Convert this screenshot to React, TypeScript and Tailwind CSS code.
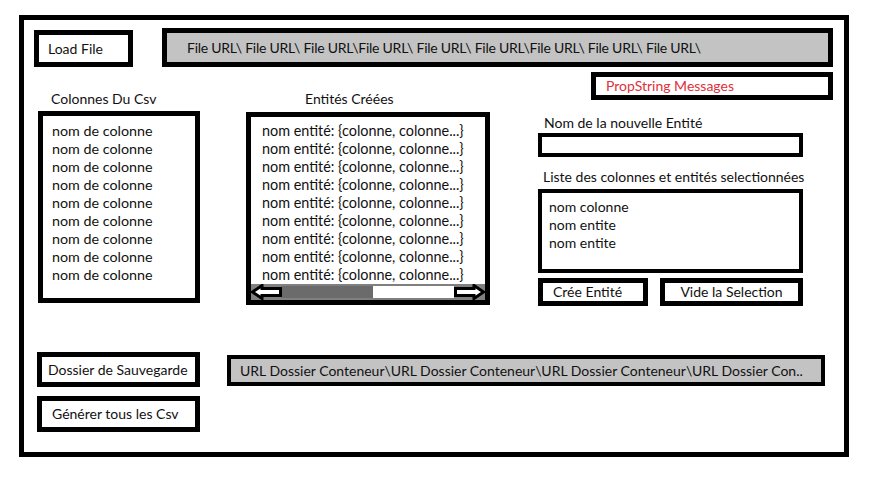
import React from "react";

const colonnes = Array.from({ length: 9 }, () => "nom de colonne");
const entites = Array.from({ length: 9 }, () => "nom entité: {colonne, colonne...}");
const selection = ["nom colonne", "nom entite", "nom entite"];

const LeftArrow = () => (
  <svg width="31" height="16" viewBox="0 0 31 16">
    <polygon points="1.5,8 11,1.5 11,4.5 29.5,4.5 29.5,11.5 11,11.5 11,14.5" fill="#fff" stroke="#000" strokeWidth="3" />
  </svg>
);

const RightArrow = () => (
  <svg width="31" height="16" viewBox="0 0 31 16">
    <polygon points="29.5,8 20,1.5 20,4.5 1.5,4.5 1.5,11.5 20,11.5 20,14.5" fill="#fff" stroke="#000" strokeWidth="3" />
  </svg>
);

export default function App() {
  return (
    <div className="w-[876px] h-[477px] bg-white pt-[15px] pl-[19px] font-['Lato',sans-serif] text-[14px] leading-[18px] text-[#111]">
      <div className="w-[830px] h-[442px] border-[5px] border-black flex flex-col">
        {/* top bar */}
        <div className="flex items-start pt-[8px]">
          <div className="ml-[10px] mt-[2px] w-[99px] h-[37px] border-[5px] border-black flex items-center pl-[9px]">
            Load File
          </div>
          <div className="ml-[29px] w-[671px] h-[39px] border-[5px] border-black bg-[#c3c3c3] flex items-center pl-[20px] whitespace-nowrap overflow-hidden tracking-[-0.25px]">
            File URL\ File URL\ File URL\File URL\ File URL\ File URL\File URL\ File URL\ File URL\
          </div>
        </div>

        {/* middle */}
        <div className="flex items-start">
          {/* colonnes du csv */}
          <div className="ml-[14px] w-[162px] flex flex-col">
            <div className="mt-[23px] pl-[13px]">Colonnes Du Csv</div>
            <div className="mt-[3px] h-[192px] border-[5px] border-black pt-[6px] pl-[9px] text-[14.3px]">
              {colonnes.map((c, i) => (
                <div key={`col-${i}`}>{c}</div>
              ))}
            </div>
          </div>

          {/* entités créées */}
          <div className="ml-[46px] w-[244px] flex flex-col">
            <div className="mt-[23px] pl-[59px]">Entités Créées</div>
            <div className="mt-[4px] h-[193px] border-[5px] border-black flex flex-col">
              <div className="flex-1 overflow-hidden pt-[5px] pl-[11px] whitespace-nowrap text-[14.4px]">
                {entites.map((e, i) => (
                  <div key={`ent-${i}`}>{e}</div>
                ))}
              </div>
              <div className="h-[16px] bg-[#808080] flex items-center">
                <LeftArrow />
                <div className="w-[91px] h-[12px] bg-[#6b6b6b]" />
                <div className="flex-1 h-[12px] bg-white" />
                <RightArrow />
              </div>
            </div>
          </div>

          {/* nouvelle entité */}
          <div className="ml-[48px] w-[295px] flex flex-col">
            <div className="self-end mt-[5px] w-[242px] h-[28px] border-[5px] border-black flex items-center pl-[10px] text-[#e0303a]">
              PropString Messages
            </div>
            <div className="mt-[14px] pl-[6px]">Nom de la nouvelle Entité</div>
            <div className="mt-[1px] w-[265px] h-[24px] border-[4px] border-black" />
            <div className="mt-[11px] pl-[5px]">Liste des colonnes et entités selectionnées</div>
            <div className="mt-[3px] w-[265px] h-[84px] border-[4px] border-black pt-[5px] pl-[7px]">
              {selection.map((s, i) => (
                <div key={`sel-${i}`}>{s}</div>
              ))}
            </div>
            <div className="mt-[5px] flex gap-[12px]">
              <div className="w-[110px] h-[28px] border-[5px] border-black flex items-center pl-[10px]">
                Crée Entité
              </div>
              <div className="w-[143px] h-[28px] border-[5px] border-black flex items-center justify-center">
                Vide la Selection
              </div>
            </div>
          </div>
        </div>

        {/* bottom */}
        <div className="mt-[46px] flex items-start">
          <div className="ml-[13px] w-[163px] h-[35px] border-[5px] border-black flex items-center pl-[6px]">
            Dossier de Sauvegarde
          </div>
          <div className="ml-[27px] mt-[3px] w-[598px] h-[31px] border-[4px] border-black bg-[#c3c3c3] flex items-center pl-[9px] whitespace-nowrap overflow-hidden">
            URL Dossier Conteneur\URL Dossier Conteneur\URL Dossier Conteneur\URL Dossier Con..
          </div>
        </div>
        <div className="ml-[13px] mt-[9px] w-[163px] h-[36px] border-[5px] border-black flex items-center pl-[10px]">
          Générer tous les Csv
        </div>
      </div>
    </div>
  );
}
